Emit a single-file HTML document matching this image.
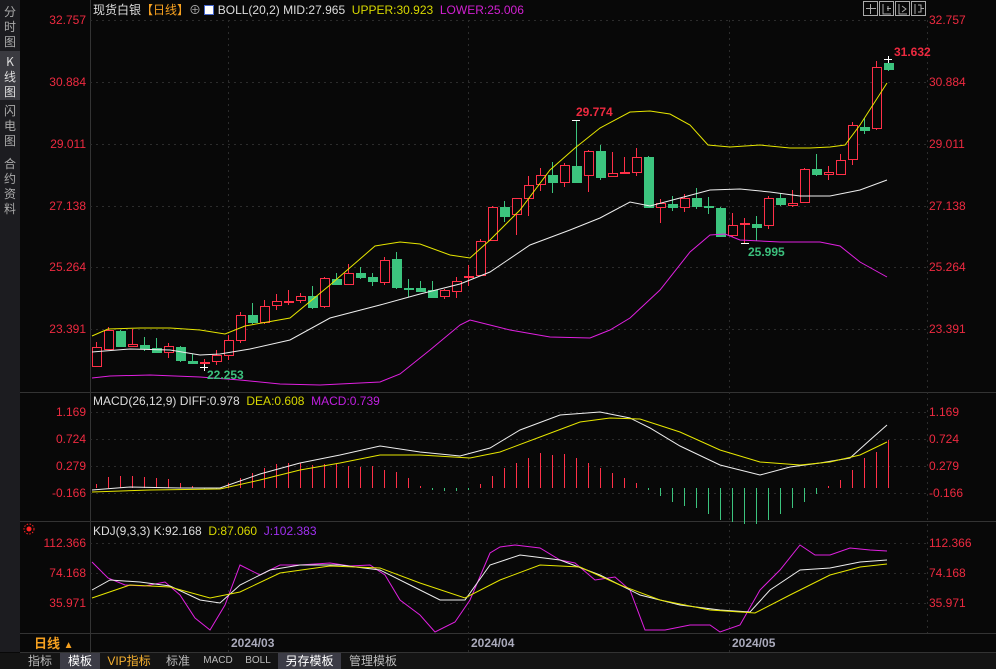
<!DOCTYPE html>
<html><head><meta charset="utf-8"><style>
*{margin:0;padding:0;box-sizing:border-box}
body{width:996px;height:669px;background:#080808;overflow:hidden;font-family:"Liberation Sans","Noto Sans CJK SC",sans-serif;position:relative;color:#ddd}
.ax{position:absolute;font-size:12px;color:#ee2a40;line-height:12px}
.l{right:910px;text-align:right}
.r{left:929px}
.side{position:absolute;left:0;top:0;width:20px;height:652px;background:#1c1c20}
.side div{position:absolute;left:0;width:20px;color:#aaa;font-size:12px;line-height:15px;text-align:center;font-family:"Noto Sans CJK SC",sans-serif}
.tabs{position:absolute;left:0;top:653px;width:996px;height:16px;background:#141414;font-size:12px;line-height:16px}
.tabs span{position:absolute;top:0;height:16px;text-align:center;color:#bbb;font-family:"Liberation Sans","Noto Sans CJK SC",sans-serif}
.leg{position:absolute;font-size:12px;line-height:14px;white-space:nowrap}
</style></head><body>
<div class="side">
<div style="top:4px;height:46px">分<br>时<br>图</div>
<div style="top:51px;height:49px;background:#3a3a40;color:#ddd;padding-top:3px">K<br>线<br>图</div>
<div style="top:103px">闪<br>电<br>图</div>
<div style="top:156px">合<br>约<br>资<br>料</div>
</div>
<svg id="s" width="996" height="669" style="position:absolute;left:0;top:0">
<g stroke="#333" stroke-width="1" fill="none">
<line x1="90.5" y1="0" x2="90.5" y2="652"/>
<line x1="20" y1="392.5" x2="996" y2="392.5"/>
<line x1="20" y1="521.5" x2="996" y2="521.5"/>
<line x1="20" y1="633.5" x2="996" y2="633.5"/>
<line x1="20" y1="652.5" x2="996" y2="652.5"/>
</g>
<g stroke="#2c2c2c" stroke-dasharray="2,4" fill="none">
<line x1="90" y1="20.5" x2="927" y2="20.5"/><line x1="90" y1="82.5" x2="927" y2="82.5"/><line x1="90" y1="144.5" x2="927" y2="144.5"/><line x1="90" y1="206.5" x2="927" y2="206.5"/><line x1="90" y1="267.5" x2="927" y2="267.5"/><line x1="90" y1="329.5" x2="927" y2="329.5"/>
<line x1="90" y1="412.5" x2="927" y2="412.5"/><line x1="90" y1="439.5" x2="927" y2="439.5"/><line x1="90" y1="466.5" x2="927" y2="466.5"/><line x1="90" y1="493.5" x2="927" y2="493.5"/>
<line x1="90" y1="543.5" x2="927" y2="543.5"/><line x1="90" y1="573.5" x2="927" y2="573.5"/><line x1="90" y1="603.5" x2="927" y2="603.5"/>
<line x1="228.5" y1="20" x2="228.5" y2="652"/><line x1="468.5" y1="20" x2="468.5" y2="652"/><line x1="729.5" y1="20" x2="729.5" y2="652"/>
<line x1="927.5" y1="20" x2="927.5" y2="633"/>
</g>
<g id="c"></g>
<g fill="none" stroke-width="1">
<polyline stroke="#e6e600" points="92,336 108,329 140,328 170,328 200,330 225,334 245,326 290,318 330,285 375,246 400,242 420,244 450,255 470,258 490,240 520,210 550,170 575,148 600,128 630,112 650,111 670,114 690,125 708,145 730,147 760,145 790,148 810,148 830,147 845,145 860,125 887,83"/>
<polyline stroke="#eee" points="92,352 130,349 170,350 200,355 220,354 250,349 290,340 330,318 380,305 420,294 460,284 490,272 530,245 570,230 600,218 630,202 650,206 680,198 710,190 740,189 770,192 800,196 830,196 860,190 887,180"/>
<polyline stroke="#e020e0" points="92,378 110,376 150,375 200,377 240,380 280,384 320,385 380,382 400,374 430,350 460,325 470,320 490,325 510,330 550,337 590,338 610,330 630,318 660,290 690,252 710,235 725,234 740,240 780,242 820,242 840,246 860,262 887,277"/>
<polyline stroke="#eee" points="92,490 130,487 180,488 220,488 260,474 300,463 340,455 380,446 420,452 460,456 490,448 520,430 560,415 600,412 630,418 650,428 680,446 720,465 760,475 790,467 820,463 850,458 870,440 887,425"/>
<polyline stroke="#e6e600" points="92,492 150,490 220,489 260,480 300,470 340,463 380,455 420,455 470,458 500,452 540,437 580,422 610,418 640,419 680,432 720,450 760,462 800,465 830,462 860,455 887,442"/>
<polyline stroke="#e020e0" points="92,562 108,578 125,585 145,586 165,582 180,595 195,618 210,630 225,605 240,565 260,575 280,565 300,565 330,563 350,566 370,565 385,575 400,600 420,615 435,632 455,622 470,600 490,553 500,547 515,545 540,548 560,560 575,563 595,580 615,577 630,590 645,630 665,630 690,625 710,625 720,632 740,625 760,590 780,570 800,545 815,555 830,555 850,548 870,550 887,551"/>
<polyline stroke="#eee" points="92,590 110,580 140,582 170,586 200,600 220,603 240,585 270,570 300,565 340,565 380,570 410,585 440,600 465,600 490,565 520,555 560,560 600,575 640,595 680,605 720,610 750,612 770,590 800,570 830,568 860,562 887,560"/>
<polyline stroke="#e6e600" points="92,598 130,585 170,587 210,598 240,592 280,573 330,566 380,568 420,583 465,598 500,580 540,565 580,567 620,585 660,600 710,610 755,613 790,595 830,575 860,567 887,564"/>
</g>
<g stroke="#fff" stroke-width="1"><line x1="200" y1="367.5" x2="208" y2="367.5"/><line x1="204.5" y1="364" x2="204.5" y2="371"/><line x1="572" y1="120.5" x2="580" y2="120.5"/><line x1="741" y1="243.5" x2="749" y2="243.5"/><line x1="884" y1="59.5" x2="892" y2="59.5"/><line x1="888.5" y1="56" x2="888.5" y2="63"/></g>
<g fill="none" stroke="#aaa"><rect x="863.5" y="1.5" width="14" height="14"/><rect x="879.5" y="1.5" width="14" height="14"/><rect x="895.5" y="1.5" width="14" height="14"/><rect x="911.5" y="1.5" width="14" height="14"/>
<path d="M870.5 4v10M866 8.5h10M883 4v10h8M888 6v5M887 8.5h4M899 4v10h8M902 6l4 3-4 3M915 4v10M918 5h3v7h-3M921 8.5h3"/></g>
<circle cx="29" cy="529" r="2.5" fill="#f22"/><circle cx="29" cy="529" r="5" fill="none" stroke="#f22" stroke-dasharray="1.5,1.5"/>
</svg>
<div class="leg" style="left:93px;top:3px;color:#ddd">现货白银<span style="color:#f5a020">【日线】</span><span style="color:#aaa">⊕</span> <span style="display:inline-block;width:10px;height:10px;background:#fff;border:1px solid #46c;vertical-align:-1px"></span> BOLL(20,2) MID:27.965 &nbsp;<span style="color:#d8d800">UPPER:30.923</span> &nbsp;<span style="color:#d020d0">LOWER:25.006</span></div>
<div class="leg" style="left:93px;top:394px;color:#ddd">MACD(26,12,9) DIFF:0.978 &nbsp;<span style="color:#d8d800">DEA:0.608</span> &nbsp;<span style="color:#c020e0">MACD:0.739</span></div>
<div class="leg" style="left:93px;top:524px;color:#ddd">KDJ(9,3,3) K:92.168 &nbsp;<span style="color:#d8d800">D:87.060</span> &nbsp;<span style="color:#a030f0">J:102.383</span></div>
<div class="ax l" style="top:14px">32.757</div><div class="ax l" style="top:76px">30.884</div><div class="ax l" style="top:138px">29.011</div><div class="ax l" style="top:200px">27.138</div><div class="ax l" style="top:261px">25.264</div><div class="ax l" style="top:323px">23.391</div>
<div class="ax r" style="top:14px">32.757</div><div class="ax r" style="top:76px">30.884</div><div class="ax r" style="top:138px">29.011</div><div class="ax r" style="top:200px">27.138</div><div class="ax r" style="top:261px">25.264</div><div class="ax r" style="top:323px">23.391</div>
<div class="ax l" style="top:406px">1.169</div><div class="ax l" style="top:433px">0.724</div><div class="ax l" style="top:460px">0.279</div><div class="ax l" style="top:487px">-0.166</div>
<div class="ax r" style="top:406px">1.169</div><div class="ax r" style="top:433px">0.724</div><div class="ax r" style="top:460px">0.279</div><div class="ax r" style="top:487px">-0.166</div>
<div class="ax l" style="top:537px">112.366</div><div class="ax l" style="top:567px">74.168</div><div class="ax l" style="top:597px">35.971</div>
<div class="ax r" style="top:537px">112.366</div><div class="ax r" style="top:567px">74.168</div><div class="ax r" style="top:597px">35.971</div>
<div class="ax" style="left:576px;top:106px;font-weight:bold">29.774</div>
<div class="ax" style="left:894px;top:46px;font-weight:bold">31.632</div>
<div class="ax" style="left:207px;top:369px;color:#3cc07d;font-weight:bold">22.253</div>
<div class="ax" style="left:748px;top:246px;color:#3cc07d;font-weight:bold">25.995</div>
<div class="leg" style="left:34px;top:637px;color:#f5a020;font-size:13px;font-weight:bold">日线 <span style="font-size:10px">▲</span></div>
<div class="leg" style="left:231px;top:636px;color:#aab;font-weight:bold">2024/03</div>
<div class="leg" style="left:471px;top:636px;color:#aab;font-weight:bold">2024/04</div>
<div class="leg" style="left:732px;top:636px;color:#aab;font-weight:bold">2024/05</div>
<div class="tabs">
<span style="left:20px;width:40px">指标</span>
<span style="left:60px;width:40px;background:#3c3c46;color:#fff">模板</span>
<span style="left:100px;width:58px;color:#f5b030">VIP指标</span>
<span style="left:158px;width:40px">标准</span>
<span style="left:198px;width:40px;font-size:10px">MACD</span>
<span style="left:238px;width:40px;font-size:10px">BOLL</span>
<span style="left:278px;width:63px;background:#3c3c46;color:#fff">另存模板</span>
<span style="left:341px;width:64px">管理模板</span>
</div>
<script>
var C=[["r",347,366,342,366],["r",330,349,327,350],["g",331,346,330,346],["r",344,346,329,346],["g",345,348,337,351],["g",348,352,338,353],["r",346,352,343,358],["g",347,360,346,362],["g",361,363,354,363],["r",362,363,359,366],["r",355,361,350,365],["r",340,355,335,360],["r",315,340,312,343],["g",315,322,303,324],["r",306,322,300,324],["r",301,305,294,310],["r",301,302,290,305],["r",296,300,293,303],["g",296,307,286,309],["r",278,306,277,308],["g",279,284,273,285],["r",273,284,264,284],["g",273,277,267,279],["g",277,281,273,286],["r",260,282,257,285],["g",259,287,252,289],["g",288,289,279,297],["g",288,291,281,292],["g",290,297,281,298],["r",290,296,289,299],["r",281,291,277,298],["r",276,277,265,286],["r",241,275,239,276],["r",207,240,206,241],["g",207,216,201,222],["r",198,214,198,235],["r",185,198,176,216],["r",175,184,168,191],["g",175,182,162,193],["r",165,182,163,187],["g",166,182,120,182],["r",151,175,150,192],["g",151,177,145,180],["r",173,176,152,176],["r",172,173,157,173],["r",157,172,148,176],["g",157,207,156,208],["r",203,207,199,223],["g",204,207,196,211],["r",198,207,194,212],["g",198,206,188,209],["g",206,207,197,214],["g",208,236,207,236],["r",225,235,213,237],["r",223,224,218,244],["g",224,227,216,241],["r",198,225,196,229],["g",198,204,193,206],["r",203,205,190,207],["r",169,202,168,202],["g",169,174,154,176],["r",172,174,166,180],["r",160,174,154,174],["r",125,159,122,165],["g",127,130,118,134],["r",67,128,61,130],["g",63,69,59,71]];
var H=[4,11,12,12,11,10,9,5,2,-1,-1,5,10,15,20,24,25,25,23,24,24,22,21,22,18,16,10,2,-2,-3,-3,-2,4,12,20,25,30,35,33,34,30,25,20,15,10,5,-2,-8,-14,-18,-20,-26,-32,-34,-36,-36,-32,-26,-20,-14,-6,2,8,18,30,36,48];
var s="",R="#ff3048",G="#3cc47e";
C.forEach(function(c,i){var x=96+i*12,col=c[0]=="r"?R:G,t=c[1],b=Math.max(c[2],t+1);
s+='<line x1="'+(x+.5)+'" y1="'+c[3]+'" x2="'+(x+.5)+'" y2="'+c[4]+'" stroke="'+col+'"/>';
if(c[0]=="r")s+='<rect x="'+(x-3.5)+'" y="'+(t+.5)+'" width="9" height="'+(b-t)+'" fill="#080808" stroke="'+R+'"/>';
else s+='<rect x="'+(x-4)+'" y="'+t+'" width="10" height="'+(b-t+1)+'" fill="'+G+'"/>';
var h=H[i];s+='<line x1="'+(x+.5)+'" y1="488" x2="'+(x+.5)+'" y2="'+(488-h)+'" stroke="'+(h>0?R:G)+'"/>';});
document.getElementById("c").innerHTML=s;
</script>
</body></html>
